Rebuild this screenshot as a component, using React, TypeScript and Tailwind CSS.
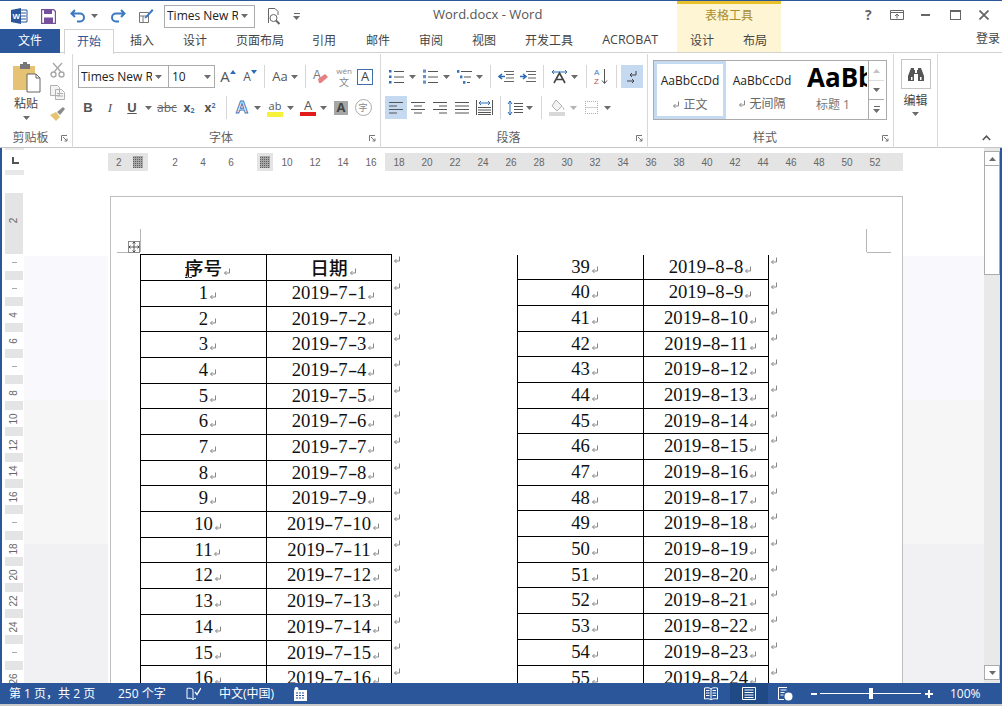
import type { ReactNode } from "react";

const uiFont = { fontFamily: '"Open Sans", "Noto Sans CJK SC", sans-serif' };

const Caret = ({ up = false }: { up?: boolean }) => (
  <svg width="7" height="4" viewBox="0 0 7 4" className="shrink-0">
    <path d={up ? "M0 4 3.5 0 7 4z" : "M0 0h7L3.5 4z"} fill="#6b6b6b" />
  </svg>
);

const Btn = ({ className = "w-[22px]", children }: { className?: string; children?: ReactNode }) => (
  <div className={`flex h-[23px] shrink-0 items-center justify-center ${className}`}>{children}</div>
);

const Sep = ({ className = "" }: { className?: string }) => (
  <div className={`h-[23px] w-px shrink-0 bg-[#d6d6d6] ${className}`} />
);

const Lines = ({ rows, stroke = "#555" }: { rows: [number, number][]; stroke?: string }) => (
  <svg width="16" height="14" viewBox="0 0 16 14">
    {rows.map(([a, b], i) => (
      <path key={i} d={`M${a} ${1.5 + i * 3.5}H${b}`} stroke={stroke} />
    ))}
  </svg>
);

const ListIcon = ({ kind }: { kind: "dot" | "num" | "multi" }) => (
  <svg width="17" height="15" viewBox="0 0 17 15">
    {[2, 7.5, 13].map((y, i) => (
      <g key={y}>
        {kind === "dot" && <rect x="1" y={y - 1} width="2.5" height="2.5" fill="#2b6cb8" />}
        {kind === "num" && <rect x="1" y={y - 1.5} width="3" height="3.2" fill="#3d76bd" opacity="0.8" />}
        {kind === "multi" && <rect x={1 + i * 3} y={y - 1} width="2.4" height="2.8" fill="#3d76bd" />}
        <path d={`M${kind === "multi" ? 5 + i * 3 : 6} ${y + 0.5}H${kind === "multi" ? 16 - i : 16}`} stroke="#555" />
      </g>
    ))}
  </svg>
);

const IndentIcon = ({ inc = false }: { inc?: boolean }) => (
  <svg width="16" height="13" viewBox="0 0 16 13">
    <path d="M6 1.5h10M8 4.500h8M8 8h8M6 11.500h10" stroke="#666" />
    <path d={inc ? "M0 6.500h5M3 4l3 2.500L3 9" : "M7 6.500H2M4 4 1 6.500 4 9"} stroke="#2b6cb8" strokeWidth="1.600" fill="none" />
  </svg>
);

const Launcher = () => (
  <svg width="7" height="7" viewBox="0 0 7 7" className="shrink-0">
    <path d="M.5 6V.5H6" stroke="#777" fill="none" />
    <path d="M2 2l4 4M6 3.500V6H3.500" stroke="#777" fill="none" />
  </svg>
);

const ReturnMark = ({ color = "#888" }: { color?: string }) => (
  <svg width="8" height="8" viewBox="0 0 8 8">
    <path d="M6.500 .5v4.500H1.500M3.500 3 1.500 5l2 2" stroke={color} fill="none" />
  </svg>
);

const Group = ({
  className,
  label,
  launcher = true,
  children,
}: {
  className: string;
  label?: string;
  launcher?: boolean;
  children: ReactNode;
}) => (
  <div className={`flex h-[94px] shrink-0 flex-col border-r border-[#d8d8d8] ${className}`}>
    <div className="flex-1">{children}</div>
    <div className="flex h-[20px] items-center pr-[4px] text-[12px] leading-none text-[#5e5e5e]">
      <span className="flex-1 text-center">{label}</span>
      {launcher && <Launcher />}
    </div>
  </div>
);

const Row = ({ className = "", children }: { className?: string; children: ReactNode }) => (
  <div className={`flex h-[23px] items-center ${className}`}>{children}</div>
);

const Gutter = () => (
  <div className="flex h-full flex-col">
    <div className="h-[108px] bg-white" />
    <div className="h-[144px] bg-[#f9f9fd]" />
    <div className="h-[144px] bg-[#f6f6f6]" />
    <div className="flex-1 bg-[#f1f1f4]" />
  </div>
);

const RulerMarker = () => (
  <svg width="14" height="14" viewBox="0 0 14 14">
    <defs>
      <pattern id="rm" width="2" height="2" patternUnits="userSpaceOnUse">
        <rect width="2" height="2" fill="#a8a8a8" />
        <rect width="1" height="1" fill="#5f5f5f" />
      </pattern>
    </defs>
    <rect x="2" y="1" width="10" height="12" fill="url(#rm)" />
  </svg>
);

const hCell = "flex w-[28px] shrink-0 items-center justify-center";

const HorizontalRuler = () => (
  <div className="flex h-[18px] w-[795px] text-[10px] text-[#666]" style={{ fontFamily: '"Liberation Sans", sans-serif' }}>
    <div className="flex w-[40px] items-center bg-[#e4e4e4] pl-[8px]">
      <span className="w-[12px]">2</span>
      <span className="ml-[3px]"><RulerMarker /></span>
    </div>
    <div className="flex w-[237px] bg-white pl-[13px]">
      {["2", "4", "6"].map((n) => (
        <div key={n} className={hCell}>{n}</div>
      ))}
      <div className="flex w-[28px] shrink-0 items-center justify-end bg-white">
        <div className="flex h-[18px] w-[16px] items-center justify-center bg-[#e4e4e4]"><RulerMarker /></div>
      </div>
      {["10", "12", "14", "16"].map((n) => (
        <div key={n} className={hCell}>{n}</div>
      ))}
    </div>
    <div className="flex flex-1 bg-[#e4e4e4]">
      {Array.from({ length: 18 }, (_, i) => 18 + i * 2).map((n) => (
        <div key={n} className={hCell}>{n}</div>
      ))}
    </div>
  </div>
);

const vLabels: Record<number, string> = {
  2: "4", 3: "6", 5: "8", 6: "10", 7: "12", 8: "14", 9: "16", 11: "18", 12: "20", 13: "22", 14: "24", 16: "26",
};

const VerticalRuler = () => (
  <div className="flex w-[18px] flex-col bg-[#e4e4e4] text-[10px] text-[#666]" style={{ fontFamily: '"Liberation Sans", sans-serif' }}>
    <div className="flex h-[61px] flex-col items-center pt-[20px]">
      <span className="-rotate-90">2</span>
    </div>
    {Array.from({ length: 17 }, (_, i) => (
      <div key={i} className="flex h-[26px] shrink-0 items-start">
        <div className="flex h-[17px] w-full flex-col items-center justify-center bg-white">
          {vLabels[i] ? <span className="-rotate-90 leading-none">{vLabels[i]}</span> : <span className="h-px w-[5px] bg-[#aaa]" />}
        </div>
      </div>
    ))}
  </div>
);

const Dated = ({ text }: { text: string }) => {
  const parts = text.split("-");
  return (
    <>
      {parts.map((p, i) => (
        <span key={i}>
          {i > 0 && <span className="inline-block w-[9.33px] scale-x-150 text-center">-</span>}
          {p}
        </span>
      ))}
    </>
  );
};

const CellText = ({ bold = false, children }: { bold?: boolean; children: ReactNode }) => (
  <span className={bold ? "font-medium" : ""}>
    {children}
    <span className="inline-block w-0 align-[-1px]">
      <span className="block w-[8px] pl-px"><ReturnMark /></span>
    </span>
  </span>
);

const cellClass =
  "flex items-center justify-center border-b border-r border-black text-[18.67px] leading-none text-[#111] overflow-visible";

const TableRow = ({ a, b, head = false }: { a: string; b: string; head?: boolean }) => {
  const headFont = { fontFamily: '"Noto Sans CJK SC", sans-serif' };
  return (
    <>
      <div className={`${cellClass} border-l ${head ? "border-t" : ""}`} style={head ? headFont : undefined}>
        <CellText bold={head}>{a}</CellText>
      </div>
      <div className={`${cellClass} ${head ? "border-t" : ""}`} style={head ? headFont : undefined}>
        <CellText bold={head}>{head ? b : <Dated text={b} />}</CellText>
      </div>
      <div className="pl-px pt-[2px]"><ReturnMark /></div>
    </>
  );
};

const leftRows = Array.from({ length: 16 }, (_, i) => ({ a: `${i + 1}`, b: `2019-7-${i + 1}` }));
const rightRows = Array.from({ length: 17 }, (_, i) => ({ a: `${i + 39}`, b: `2019-8-${i + 8}` }));

const tableGrid = "grid w-[262px] shrink-0 grid-cols-[127px_125px_10px] auto-rows-[25.7px]";

const Page = () => (
  <div className="relative ml-[2px] mt-[25px] h-[600px] w-[793px] border-x border-t border-[#bfbfbf] bg-white pl-[29px] pt-[57px]" style={{ fontFamily: '"Liberation Serif", "Noto Sans CJK SC", serif' }}>
    <div className="absolute left-[29px] top-[32px] h-[23px] w-px bg-[#b5b5b5]" />
    <div className="absolute left-[6px] top-[55px] h-px w-[11px] bg-[#b5b5b5]" />
    <div className="absolute right-[35px] top-[32px] h-[23px] w-px bg-[#b5b5b5]" />
    <div className="absolute right-[11px] top-[55px] h-px w-[24px] bg-[#b5b5b5]" />
    <div className="absolute left-[17px] top-[44px] flex h-[12px] w-[12px] items-center justify-center border border-[#8a8a8a] bg-white">
      <svg width="10" height="10" viewBox="0 0 10 10">
        <path d="M5 0v10M0 5h10M3.500 1.500 5 0l1.500 1.500M3.500 8.500 5 10l1.500-1.500M1.500 3.500 0 5l1.500 1.500M8.500 3.500 10 5 8.500 6.500" stroke="#333" strokeWidth="0.800" fill="none" />
      </svg>
    </div>
    <svg width="7" height="11" viewBox="0 0 7 11" className="absolute left-[74px] top-[70px] z-10">
      <path d="M0 .5h2.500L3.500 1l1-.5H7M3.500 1v9M0 10.500h2.500l1-.5 1 .5H7" stroke="#222" fill="none" />
    </svg>
    <div className="flex items-start">
      <div className={`${tableGrid} grid-rows-[26.9px]`}>
        <TableRow a="序号" b="日期" head />
        {leftRows.map((r) => (
          <TableRow key={r.a} a={r.a} b={r.b} />
        ))}
      </div>
      <div className={`${tableGrid} ml-[115px] mt-[0.5px]`}>
        {rightRows.map((r) => (
          <TableRow key={r.a} a={r.a} b={r.b} />
        ))}
      </div>
    </div>
  </div>
);

const Scrollbar = () => (
  <div className="flex w-[16px] shrink-0 flex-col bg-[#e9e9e9]">
    <div className="mt-[3px] flex h-[15px] items-center justify-center border border-[#ababab] bg-white"><Caret up /></div>
    <div className="h-[109px] border-x border-b border-[#ababab] bg-white" />
    <div className="flex-1" />
    <div className="mb-[3px] flex h-[15px] items-center justify-center border border-[#ababab] bg-white"><Caret /></div>
  </div>
);

export default function App() {
  return (
    <div className="flex h-[706px] w-[1002px] flex-col overflow-hidden bg-white" style={uiFont}>
      {/* title bar */}
      <div className="flex h-[29px] shrink-0 border-t border-[#2b579a] pl-[2px]">
        <div className="flex h-[28px] w-[431px] shrink-0 items-center pt-[2px]">
          <svg width="17" height="16" viewBox="0 0 17 16" className="ml-[9px]">
            <path d="M9 2h7v12H9z" fill="#fff" stroke="#2b579a" />
            <path d="M10 5h5M10 8h5M10 11h5" stroke="#2b579a" />
            <path d="M0 2 10 0v16L0 14z" fill="#2b579a" />
            <text x="1.500" y="11" fontSize="8" fontWeight="700" fill="#fff" fontFamily="Liberation Sans">W</text>
          </svg>
          <svg width="15" height="15" viewBox="0 0 15 15" className="ml-[13px]">
            <path d="M.5.5h12l2 2v12H.5z" fill="#fff" stroke="#75509d" strokeWidth="1.400" />
            <path d="M3 1h8v4H3z" fill="#75509d" />
            <path d="M3 8.500h9V14H3z" fill="#75509d" />
          </svg>
          <svg width="16" height="14" viewBox="0 0 16 14" className="ml-[14px]">
            <path d="M5 1 1.500 4.500 5 8M2 4.500h8a4 4 0 0 1 0 8H7" stroke="#3b78c2" strokeWidth="2" fill="none" />
          </svg>
          <span className="ml-[5px]"><Caret /></span>
          <svg width="16" height="14" viewBox="0 0 16 14" className="ml-[12px]">
            <path d="M11 1l3.500 3.500L11 8M14 4.500H6a4 4 0 0 0 0 8h3" stroke="#3b78c2" strokeWidth="2" fill="none" />
          </svg>
          <svg width="16" height="16" viewBox="0 0 16 16" className="ml-[12px]">
            <path d="M1.500 4.500h9v10h-9zM1.500 8h9M5 8v6.500" stroke="#777" fill="none" />
            <path d="M7 9l7-8 1.500 1.500-7 7.500-2 .5z" fill="#3b78c2" />
          </svg>
          <div className="ml-[10px] flex h-[23px] w-[91px] items-center border border-[#ababab] pl-[2px] text-[12px] text-[#222]">
            <span className="mr-[3px] w-[71px] overflow-hidden whitespace-nowrap">Times New R</span>
            <Caret />
          </div>
          <svg width="15" height="17" viewBox="0 0 15 17" className="ml-[11px]">
            <path d="M2.500 15V.5H9l3 3V7" stroke="#666" fill="none" />
            <circle cx="7.500" cy="10" r="3.500" stroke="#666" fill="#fff" />
            <path d="M10 12.500l3.500 3.500" stroke="#666" strokeWidth="2" />
          </svg>
          <div className="ml-[12px] flex flex-col items-center gap-[2px]">
            <div className="h-px w-[6px] bg-[#666]" />
            <Caret />
          </div>
        </div>
        <div className="flex h-[28px] w-[244px] shrink-0 items-center text-[13px] text-[#555]">Word.docx - Word</div>
        <div className="flex h-[28px] w-[104px] shrink-0 flex-col border-t-[3px] border-[#e8c02c] bg-[#fdf5d3] pb-[2px]">
          <div className="flex-1 pt-[3px] text-center text-[12px] leading-[18px] text-[#a98c2f]">表格工具</div>
        </div>
        <div className="flex h-[28px] flex-1 items-center pr-[2px] text-[#666]">
          <span className="ml-[84px] w-[12px] text-[14px] font-bold leading-none">?</span>
          <svg width="14" height="10" viewBox="0 0 14 10" className="ml-[13px]">
            <path d="M.5.5h13v9H.5zM.5 2.500h13M7 8.500V4.500M5 6l2-2 2 2" stroke="#666" fill="none" />
          </svg>
          <div className="ml-[17px] h-[2px] w-[9px] self-center bg-[#666]" />
          <div className="ml-[20px] h-[10px] w-[11px] border border-t-2 border-[#666]" />
          <svg width="10" height="10" viewBox="0 0 10 10" className="ml-[18px]">
            <path d="M.5.5l9 9M9.500.5l-9 9" stroke="#666" strokeWidth="1.800" />
          </svg>
        </div>
      </div>

      {/* tabs */}
      <div className="flex h-[24px] shrink-0 border-b border-[#d2d2d2] text-[12px] text-[#444]">
        <div className="flex h-[24px] w-[60px] shrink-0 items-center justify-center bg-[#2b579a] text-white">文件</div>
        <div className="ml-[4px] flex h-[25px] w-[50px] shrink-0 items-center justify-center border-x border-t border-[#d2d2d2] bg-white text-[#2b579a]">开始</div>
        <div className="flex w-[563px] shrink-0 items-center">
          <span className="ml-[16px]">插入</span>
          <span className="ml-[29px]">设计</span>
          <span className="ml-[29px]">页面布局</span>
          <span className="ml-[28px]">引用</span>
          <span className="ml-[30px]">邮件</span>
          <span className="ml-[29px]">审阅</span>
          <span className="ml-[29px]">视图</span>
          <span className="ml-[29px]">开发工具</span>
          <span className="ml-[29px] text-[12.5px]">ACROBAT</span>
        </div>
        <div className="flex h-[23px] w-[104px] shrink-0 items-center bg-[#fdf5d3] pl-[13px]">
          <span>设计</span>
          <span className="ml-[29px]">布局</span>
        </div>
        <div className="flex h-[20px] flex-1 items-center justify-end pr-[2px]">登录</div>
      </div>

      {/* ribbon */}
      <div className="flex h-[95px] shrink-0 border-b border-[#c6c6c6] pt-px text-[#444]">
        <Group className="w-[73px]" label="剪贴板">
          <div className="flex pt-[8px]">
            <div className="ml-[8px] flex w-[36px] flex-col items-center">
              <svg width="29" height="31" viewBox="0 0 29 31">
                <path d="M1 4h22v24H1z" fill="#e5c274" />
                <path d="M8 2h3V0h4v2h3v5H8z" fill="#777" />
                <path d="M15 12h9l4 4v14H15z" fill="#fff" stroke="#666" />
                <path d="M24 12v4h4" stroke="#666" fill="none" />
              </svg>
              <span className="mt-[2px] text-[12px] leading-[17px]">粘贴</span>
              <span className="mt-[4px]"><Caret /></span>
            </div>
            <div className="ml-[5px] flex flex-col items-center gap-[7px]">
              <svg width="15" height="16" viewBox="0 0 15 16">
                <path d="M3 1l8 9M12 1 4 10" stroke="#a8a8a8" strokeWidth="1.400" />
                <circle cx="3.500" cy="12.500" r="2.500" fill="none" stroke="#a8a8a8" strokeWidth="1.400" />
                <circle cx="11.500" cy="12.500" r="2.500" fill="none" stroke="#a8a8a8" strokeWidth="1.400" />
              </svg>
              <svg width="15" height="15" viewBox="0 0 15 15">
                <path d="M.5.5h7l2 2v8H.5zM5.500 4.500h6l3 3v7h-9z" fill="#f4f4f4" stroke="#b0b0b0" />
                <path d="M7 8.500h6M7 11h6" stroke="#b0b0b0" />
              </svg>
              <svg width="16" height="14" viewBox="0 0 16 14">
                <path d="M1 8l6-3 4 5-4 4z" fill="#e5c274" />
                <path d="M8 5l6-5 2 2-5 6z" fill="#8a8a8a" />
              </svg>
            </div>
          </div>
        </Group>

        <Group className="w-[308px]" label="字体">
          <Row className="mt-[11px] pl-[5px]">
            <div className="flex h-[23px] w-[91px] items-center border border-[#ababab] pl-[2px] text-[12px] text-[#222]">
              <span className="mr-[3px] w-[71px] overflow-hidden whitespace-nowrap">Times New R</span>
              <Caret />
            </div>
            <div className="-ml-px flex h-[23px] w-[47px] items-center border border-[#ababab] pl-[3px] text-[12px] text-[#222]">
              <span className="w-[32px]">10</span>
              <Caret />
            </div>
            <Btn className="ml-[3px] w-[20px]">
              <span className="text-[15px] leading-none text-[#555]">A</span>
              <svg width="6" height="4" viewBox="0 0 6 4" className="mb-[10px]"><path d="M0 4l3-4 3 4z" fill="#2b6cb8" /></svg>
            </Btn>
            <Btn className="ml-[2px] w-[20px]">
              <span className="text-[12px] leading-none text-[#555]">A</span>
              <svg width="6" height="4" viewBox="0 0 6 4" className="mb-[10px]"><path d="M0 0h6L3 4z" fill="#2b6cb8" /></svg>
            </Btn>
            <Sep className="ml-[4px]" />
            <Btn className="ml-[5px] w-[30px] gap-[3px]">
              <span className="text-[13px] text-[#555]">Aa</span>
              <Caret />
            </Btn>
            <Sep className="ml-[5px]" />
            <Btn className="ml-[5px] w-[20px]">
              <svg width="16" height="15" viewBox="0 0 16 15">
                <text x="0" y="10" fontSize="12" fill="#777" fontFamily="Liberation Sans">A</text>
                <path d="M5 10l7-5 3 3-7 6H6z" fill="#ea7f7f" />
              </svg>
            </Btn>
            <Btn className="ml-[2px] w-[22px] flex-col gap-[1px] text-[#888]">
              <span className="h-[10px] text-[8px] leading-[10px]">wén</span>
              <span className="h-[11px] text-[10px] leading-[11px]">文</span>
            </Btn>
            <div className="ml-[2px] flex h-[16px] w-[16px] items-center justify-center border border-[#3f6ea8] text-[13px] leading-none text-[#444]">A</div>
          </Row>
          <Row className="mt-[8px] pl-[4px]">
            <Btn className="w-[22px]"><span className="text-[13px] font-bold text-[#555]" style={{ fontFamily: '"Liberation Sans"' }}>B</span></Btn>
            <Btn className="w-[22px]"><span className="text-[13px] italic text-[#555]" style={{ fontFamily: '"Liberation Serif"' }}>I</span></Btn>
            <Btn className="w-[22px]"><span className="text-[13px] font-bold text-[#555] underline" style={{ fontFamily: '"Liberation Sans"' }}>U</span></Btn>
            <Btn className="w-[10px]"><Caret /></Btn>
            <Btn className="ml-[3px] w-[22px]"><span className="text-[12px] text-[#666] line-through">abc</span></Btn>
            <Btn className="w-[22px]"><span className="text-[12px] font-bold text-[#555]">x<sub className="text-[7px] text-[#3f6ea8]">2</sub></span></Btn>
            <Btn className="w-[20px]"><span className="text-[12px] font-bold text-[#555]">x<sup className="text-[7px] text-[#3f6ea8]">2</sup></span></Btn>
            <Sep className="ml-[6px]" />
            <Btn className="ml-[5px] w-[20px]">
              <span className="text-[17px] font-bold leading-none text-white [-webkit-text-stroke:1px_#3f78bd]" style={{ fontFamily: '"Liberation Sans"' }}>A</span>
            </Btn>
            <Btn className="w-[10px]"><Caret /></Btn>
            <Btn className="ml-[3px] w-[20px] flex-col">
              <span className="text-[11px] leading-[13px] text-[#555]">ab</span>
              <div className="h-[5px] w-[16px] bg-[#f6f13a]" />
            </Btn>
            <Btn className="w-[10px]"><Caret /></Btn>
            <Btn className="ml-[3px] w-[20px] flex-col">
              <span className="text-[13px] leading-[13px] text-[#555]">A</span>
              <div className="h-[4px] w-[16px] bg-[#e11a1a]" />
            </Btn>
            <Btn className="w-[10px]"><Caret /></Btn>
            <Btn className="ml-[3px] w-[20px]">
              <div className="flex h-[14px] w-[14px] items-center justify-center bg-[#a6a6a6] text-[13px] font-bold leading-none text-[#444]">A</div>
            </Btn>
            <Btn className="ml-[2px] w-[20px]">
              <div className="flex h-[17px] w-[17px] items-center justify-center rounded-full border border-[#aaa] text-[9px] leading-none text-[#888]">字</div>
            </Btn>
          </Row>
        </Group>

        <Group className="w-[267px]" label="段落">
          <Row className="mt-[11px] pl-[4px]">
            <Btn><ListIcon kind="dot" /></Btn>
            <Btn className="w-[10px]"><Caret /></Btn>
            <Btn className="ml-[2px] w-[22px]"><ListIcon kind="num" /></Btn>
            <Btn className="w-[10px]"><Caret /></Btn>
            <Btn className="ml-[3px] w-[20px]"><ListIcon kind="multi" /></Btn>
            <Btn className="w-[10px]"><Caret /></Btn>
            <Sep className="ml-[6px]" />
            <Btn className="ml-[4px] w-[22px]"><IndentIcon /></Btn>
            <Btn className="w-[22px]"><IndentIcon inc /></Btn>
            <Sep className="ml-[4px]" />
            <Btn className="ml-[4px] w-[22px]">
              <svg width="17" height="15" viewBox="0 0 17 15">
                <path d="M1 3h15M3 1 1 3l2 2M14 1l2 2-2 2" stroke="#2b6cb8" fill="none" />
                <path d="M3 14 8.500 4 14 14M5 10.500h7" stroke="#444" strokeWidth="1.600" fill="none" />
              </svg>
            </Btn>
            <Btn className="w-[8px]"><Caret /></Btn>
            <Sep className="ml-[8px]" />
            <Btn className="ml-[3px] w-[22px]">
              <svg width="14" height="17" viewBox="0 0 14 17">
                <text x="0" y="7" fontSize="8" fill="#3f78bd" fontFamily="Liberation Sans">A</text>
                <text x="0" y="16" fontSize="8" fill="#c0504d" fontFamily="Liberation Sans">Z</text>
                <path d="M10.500 1v14M8 12.500l2.500 3 2.500-3" stroke="#555" fill="none" />
              </svg>
            </Btn>
            <Sep className="ml-[4px]" />
            <Btn className="ml-[4px] w-[22px] bg-[#c5d9f1]">
              <svg width="12" height="14" viewBox="0 0 12 14">
                <path d="M10 1v4H4M6 3 4 5l2 2M1 11h7M6 9l2 2-2 2" stroke="#444" fill="none" />
              </svg>
            </Btn>
          </Row>
          <Row className="mt-[8px] pl-[4px]">
            <Btn className="w-[22px] bg-[#c5d9f1]"><Lines rows={[[1, 15], [1, 9], [1, 15], [1, 9]]} /></Btn>
            <Btn className="w-[22px]"><Lines rows={[[1, 15], [4, 12], [1, 15], [4, 12]]} /></Btn>
            <Btn className="w-[22px]"><Lines rows={[[1, 15], [7, 15], [1, 15], [7, 15]]} /></Btn>
            <Btn className="w-[22px]"><Lines rows={[[1, 15], [1, 15], [1, 15], [1, 15]]} /></Btn>
            <Btn className="w-[22px]">
              <svg width="17" height="15" viewBox="0 0 17 15">
                <path d="M.5 0v15M16.500 0v15" stroke="#555" />
                <path d="M3 3h11M5 1 3 3l2 2M12 1l2 2-2 2" stroke="#2b6cb8" fill="none" />
                <path d="M2 7.500h13M2 10h13M2 12.500h13M2 14.500h13" stroke="#555" />
              </svg>
            </Btn>
            <Sep className="ml-[5px]" />
            <Btn className="ml-[4px] w-[20px]">
              <svg width="16" height="16" viewBox="0 0 16 16">
                <path d="M3 1v14M1 4l2-3 2 3M1 12l2 3 2-3" stroke="#2b6cb8" fill="none" />
                <path d="M7 3.500h9M7 6.500h9M7 9.500h9M7 12.500h9" stroke="#555" />
              </svg>
            </Btn>
            <Btn className="w-[8px]"><Caret /></Btn>
            <Sep className="ml-[8px]" />
            <Btn className="ml-[5px] w-[20px]">
              <svg width="17" height="17" viewBox="0 0 17 17">
                <path d="M7 1l6 6-5 5-5-5z" fill="#f3f3f3" stroke="#b0b0b0" />
                <path d="M13 7c2 2 3 4 2 4s-1-2-2-4z" fill="#b0b0b0" />
                <rect x="0" y="13" width="16" height="4" fill="#d8d8d8" />
              </svg>
            </Btn>
            <Btn className="ml-[2px] w-[8px] opacity-50"><Caret /></Btn>
            <Btn className="ml-[5px] w-[18px]">
              <div className="h-[13px] w-[13px] border border-dotted border-[#b0b0b0] bg-[linear-gradient(#d0d0d0,#d0d0d0)] bg-[length:100%_1px] bg-center bg-no-repeat" />
            </Btn>
            <Btn className="ml-[3px] w-[8px]"><Caret /></Btn>
          </Row>
        </Group>

        <Group className="w-[246px]" label="样式">
          <div className="ml-[5px] mt-[6px] flex h-[60px] w-[234px] border border-[#ababab]">
            <div className="flex w-[72px] flex-col items-center border-[3px] border-[#c5d9f1] pt-[8px]">
              <span className="text-[12px] leading-[18px] text-[#222]">AaBbCcDd</span>
              <span className="mt-[6px] flex items-center gap-[3px] text-[12px] text-[#666]"><ReturnMark />正文</span>
            </div>
            <div className="flex w-[72px] flex-col items-center pt-[11px]">
              <span className="text-[12px] leading-[18px] text-[#222]">AaBbCcDd</span>
              <span className="mt-[5px] flex items-center gap-[3px] text-[12px] text-[#666]"><ReturnMark />无间隔</span>
            </div>
            <div className="flex w-[70px] flex-col items-center overflow-hidden pl-[8px]">
              <span className="h-[33px] w-[60px] overflow-hidden whitespace-nowrap text-[26px] font-bold leading-[33px] text-black">AaBb</span>
              <span className="whitespace-nowrap pr-[8px] pt-[2px] text-[12px] text-[#777]">标题 1</span>
            </div>
            <div className="flex w-[16px] flex-col border-l border-[#ababab]">
              <div className="flex h-[20px] items-center justify-center border-b border-[#ababab] opacity-40"><Caret up /></div>
              <div className="flex h-[19px] items-center justify-center border-b border-[#ababab]"><Caret /></div>
              <div className="flex flex-1 flex-col items-center justify-center gap-[2px]">
                <div className="h-px w-[6px] bg-[#666]" />
                <Caret />
              </div>
            </div>
          </div>
        </Group>

        <Group className="w-[44px]" launcher={false}>
          <div className="ml-[7px] mt-[5px] flex h-[30px] w-[30px] items-center justify-center border border-[#c4c4c4]">
            <svg width="16" height="13" viewBox="0 0 16 13">
              <path d="M3 0h3v2H7v3h2V2h1V0h3l3 8v5H10V6H6v7H0V8z" fill="#555" />
              <path d="M3 9h1.500v3H3zM12 9h1.500v3H12z" fill="#fff" />
            </svg>
          </div>
          <div className="mt-[4px] flex flex-col items-center text-[12px] leading-[16px]">
            <span>编辑</span>
            <span className="mt-[3px]"><Caret /></span>
          </div>
        </Group>

        <div className="flex flex-1 items-end justify-end pb-[6px] pr-[11px]">
          <svg width="9" height="6" viewBox="0 0 9 6"><path d="M.8 5 4.500 1.200 8.200 5" stroke="#555" strokeWidth="1.600" fill="none" /></svg>
        </div>
      </div>

      {/* document */}
      <div className="flex min-h-0 flex-1">
        <div className="w-[2px] shrink-0 bg-[#2b579a]" />
        <div className="flex w-[22px] shrink-0 flex-col pl-[3px]">
          <div className="-mr-[6px] flex h-[27px] w-[25px] shrink-0 items-start bg-[#e8e8e8]">
            <div className="mt-[2px] flex h-[20px] w-[20px] items-center justify-center bg-white">
              <div className="h-[7px] w-[7px] border-b-2 border-l-2 border-[#555]" />
            </div>
          </div>
          <div className="mt-[18px] min-h-0 flex-1 overflow-hidden"><VerticalRuler /></div>
        </div>
        <div className="w-[84px] shrink-0"><Gutter /></div>
        <div className="flex w-[795px] shrink-0 flex-col overflow-hidden">
          <div className="mt-[5px]"><HorizontalRuler /></div>
          <Page />
        </div>
        <div className="w-[81px] shrink-0"><Gutter /></div>
        <Scrollbar />
        <div className="w-[2px] shrink-0 bg-[#2b579a]" />
      </div>

      {/* status bar */}
      <div className="flex h-[21px] shrink-0 items-center bg-[#2b579a] text-[12px] text-white">
        <span className="ml-[9px] w-[109px]">第 1 页，共 2 页</span>
        <span className="w-[68px]">250 个字</span>
        <svg width="15" height="13" viewBox="0 0 15 13">
          <path d="M7 2.500C5.500 1 3 1 1 1.500v10c2-.5 4.500-.5 6 1 1-.8 2-1.200 3-1.300M7 2.500v10" stroke="#fff" fill="none" />
          <path d="M9 5l2 2.500L15 1" stroke="#fff" strokeWidth="1.400" fill="none" />
        </svg>
        <span className="ml-[18px] w-[75px]">中文(中国)</span>
        <svg width="13" height="14" viewBox="0 0 13 14">
          <path d="M0 3h13v11H0z" fill="#fff" />
          <circle cx="2.500" cy="2" r="2" fill="#fff" />
          <path d="M2 6h9M2 8.500h9M2 11h9" stroke="#2b579a" strokeDasharray="2 1" />
        </svg>
        <div className="ml-[397px] flex w-[14px] justify-center">
          <svg width="14" height="13" viewBox="0 0 14 13">
            <path d="M.5 1C3 .5 5.500.5 7 2c1.500-1.500 4-1.500 6.500-1v11c-2.500-.5-5-.5-6.500 1-1.500-1.500-4-1.500-6.500-1zM7 2v11M2 3.500h3.500M2 6h3.500M2 8.500h3.500M8.500 3.500H12M8.500 6H12M8.500 8.500H12" stroke="#fff" fill="none" />
          </svg>
        </div>
        <div className="ml-[12px] flex h-[21px] w-[38px] items-center justify-center bg-[#204a86]">
          <svg width="14" height="13" viewBox="0 0 14 13">
            <path d="M.5.5h13v12H.5zM2.500 3h9M2.500 5.500h9M2.500 8h9M2.500 10.500h9" stroke="#fff" fill="none" />
          </svg>
        </div>
        <svg width="15" height="14" viewBox="0 0 15 14" className="ml-[10px]">
          <path d="M9 .5H.5v12H6M2.500 3h6M2.500 5.500h4M2.500 8h3" stroke="#fff" fill="none" />
          <circle cx="10.500" cy="9.500" r="4" fill="#fff" />
        </svg>
        <div className="ml-[18px] h-[2px] w-[6px] bg-white" />
        <div className="relative ml-[3px] h-px w-[101px] bg-white">
          <div className="absolute left-[49px] top-[-5px] h-[11px] w-[4px] bg-white" />
        </div>
        <svg width="8" height="8" viewBox="0 0 8 8" className="ml-[4px]">
          <path d="M4 0v8M0 4h8" stroke="#fff" strokeWidth="2" />
        </svg>
        <span className="ml-[17px]">100%</span>
      </div>
      <div className="h-[2px] shrink-0 bg-[#c9c9c9]" />
    </div>
  );
}
